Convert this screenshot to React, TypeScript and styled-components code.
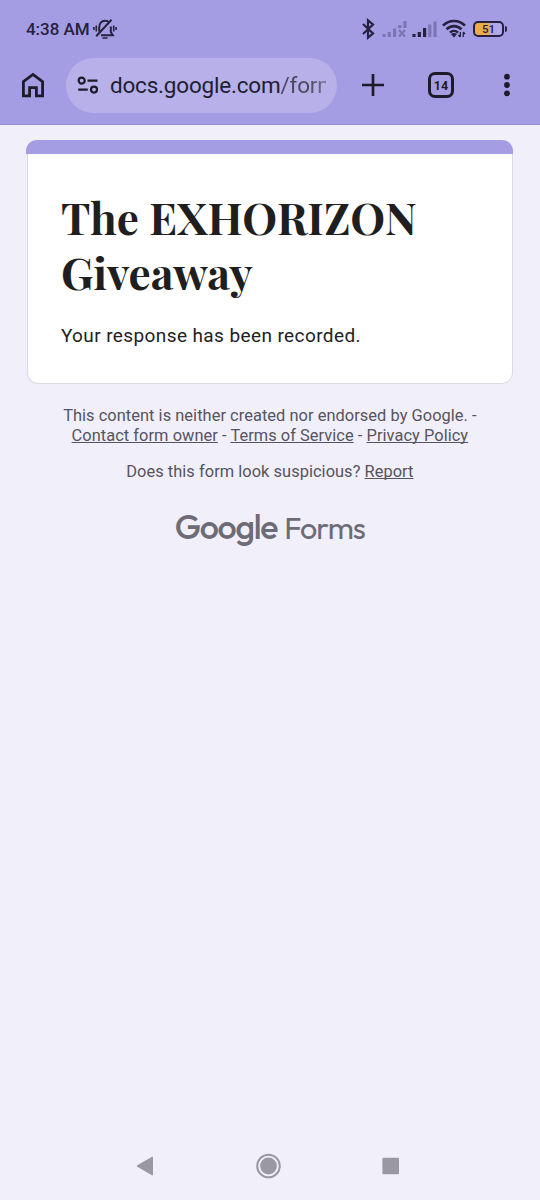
import React from "react";
import styled, { createGlobalStyle } from "styled-components";

const Global = createGlobalStyle`
  * { box-sizing: border-box; }
  body { margin: 0; background: #f1effa; font-family: Roboto, sans-serif; }
  svg { display: block; flex: none; }
`;

const Screen = styled.div`
  width: 540px;
  height: 1200px;
  display: flex;
  flex-direction: column;
  background: #f1effa;
  overflow: hidden;
`;

const Header = styled.header`
  height: 125px;
  background: #a59de3;
  border-bottom: 1px solid #968fc8;
`;

const StatusBar = styled.div`
  height: 57px;
  padding: 0 33px 0 26px;
  display: flex;
  align-items: center;
  color: #25213f;
`;

const Clock = styled.span`
  width: 66.5px;
  padding-top: 1px;
  font-size: 17px;
  line-height: 20px;
  font-weight: 500;
  letter-spacing: -0.05px;
  white-space: nowrap;
`;

const StatusIcons = styled.div`
  margin-left: auto;
  display: flex;
  align-items: center;
`;

const Toolbar = styled.div`
  height: 56px;
  display: flex;
  align-items: center;
  color: #1d1b2a;
`;

const IconButton = styled.button<{ $width: number }>`
  width: ${(p) => p.$width}px;
  height: 56px;
  padding: 0;
  border: 0;
  background: none;
  color: inherit;
  display: flex;
  align-items: center;
  justify-content: center;
`;

const AddressBar = styled.div`
  width: 271px;
  height: 55px;
  padding: 0 11px;
  display: flex;
  align-items: center;
  gap: 11px;
  border-radius: 28px;
  background: #b7b0e9;
`;

const Url = styled.span`
  flex: 1;
  overflow: hidden;
  white-space: nowrap;
  font-size: 22.5px;
  line-height: 30px;
  letter-spacing: -0.2px;
  color: #211e31;
`;

const Path = styled.span`
  background: linear-gradient(90deg, #4a475c 0, #4a475c 28px, #77738f 46px);
  background-clip: text;
  color: transparent;
`;

const TabCount = styled.span`
  width: 26px;
  height: 26px;
  border: 3px solid #1d1b2a;
  border-radius: 7px;
  font: 700 12.5px/21px Roboto, sans-serif;
  text-align: center;
`;

const Main = styled.main`
  flex: 1;
  padding: 14.5px 26.6px 0 26.4px;
`;

const Card = styled.section`
  height: 244.5px;
  border-radius: 11px;
  overflow: hidden;
`;

const Accent = styled.div`
  height: 14px;
  background: #a59de3;
`;

const CardBody = styled.div`
  height: 230.5px;
  margin: 0 0.5px;
  padding: 35.4px 33px 0;
  background: #fff;
  border: 1px solid #dadbe0;
  border-top: 0;
  border-radius: 0 0 11px 11px;
`;

const Title = styled.h1`
  margin: 0;
  font: 700 44px/55px "Playfair Display", "Liberation Serif", serif;
  color: #1f1f1f;
`;

const TitleLine = styled.span`
  display: block;
  white-space: nowrap;
`;

const Message = styled.p`
  margin: 23px 0 0;
  font-size: 19px;
  line-height: 28px;
  letter-spacing: 0.4px;
  color: #202124;
  white-space: nowrap;
`;

const Notice = styled.p<{ $top: number }>`
  margin: ${(p) => p.$top}px 0 0;
  font-size: 16.4px;
  line-height: 20px;
  letter-spacing: 0.05px;
  text-align: center;
  white-space: nowrap;
  color: #56545e;
`;

const Link = styled.a`
  text-decoration: underline;
  text-decoration-skip-ink: none;
  text-underline-offset: 1px;
  text-decoration-thickness: 1px;
`;

const Brand = styled.div`
  margin-top: 24px;
  display: flex;
  justify-content: center;
  align-items: baseline;
  gap: 7px;
  font: 500 34px/42px "Product Sans", "Google Sans", Outfit, Figtree, Poppins, Lato, sans-serif;
  letter-spacing: -1.3px;
  color: #6d6b75;
`;

const Product = styled.span`
  font-weight: 400;
  font-size: 30.5px;
  letter-spacing: -0.9px;
`;

const NavBar = styled.nav`
  height: 68px;
  padding: 6px 89px 0 85px;
  display: flex;
  justify-content: space-between;
`;

const BellOff = () => (
  <svg width="24" height="22" viewBox="0 0 24 22" fill="none" stroke="currentColor" strokeWidth="2">
    <path d="M6.2 13.5V9.5C6.2 5.5 8.5 2.8 12 2.8c1.8 0 3.2.6 4.2 1.7M17.8 8.5v5.5l2 3.2H8M3.2 18.2 18.5 1.8" />
    <path d="M9.5 20h5M3.3 7.5v6M.9 9v3M20.7 7.5v6M23.1 9v3" strokeWidth="1.6" />
  </svg>
);

const Bluetooth = () => (
  <svg width="15" height="22" viewBox="0 0 15 22" fill="none" stroke="currentColor" strokeWidth="2.2">
    <path d="m2 6 10 9.5-5 4.2V2.3l5 4.2L2 16" />
  </svg>
);

const NoSignal = () => (
  <svg width="25" height="18" viewBox="0 0 25 18" stroke="#7c75b4" strokeWidth="3.2">
    <path d="M2 17v-3M7.3 17v-5M12.6 17V8.5M17.8 8V5M23 8V1" />
    <path d="m17 10 6 6.5M23 10l-6 6.5" strokeWidth="2.2" />
  </svg>
);

const Signal = () => (
  <svg width="25" height="18" viewBox="0 0 25 18" stroke="currentColor" strokeWidth="3.2">
    <path d="M2 17v-3M7.3 17v-5M12.6 17V8" />
    <path d="M17.8 17V4.5M23 17V1.5" stroke="#7c75b4" />
  </svg>
);

const Wifi = () => (
  <svg width="24" height="19" viewBox="0 0 24 19" fill="none" stroke="currentColor" strokeWidth="2.6">
    <path d="M1 6.6c6.2-6.2 15.8-6.2 22 0M4.5 10.3c4.3-4.2 10.7-4.2 15 0M8 13.6c2.3-2.2 5.7-2.2 8 0" />
    <path d="m9 15 3 3.5 3-3.5c-1.7-1.5-4.3-1.5-6 0Z" fill="currentColor" stroke="none" />
    <path d="M18.3 13v5M21.3 13v5M16.5 16l1.8 2M23 15l-1.7-2" strokeWidth="1.3" />
  </svg>
);

const BatteryShell = styled.div`
  width: 31px;
  height: 16px;
  border: 2px solid #25213f;
  border-radius: 5px;
  background: linear-gradient(90deg, #b0a8e8 0 1px, #efaa48 1px 14px, #b0a8e8 14px);
  background-clip: padding-box;
  color: #25213f;
  font: 500 11.5px/13px Roboto, sans-serif;
  text-align: center;
`;

const BatteryTip = styled.div`
  width: 2px;
  height: 6px;
  margin-left: 1px;
  border-radius: 0 2px 2px 0;
  background: #25213f;
`;

const Gap = styled.span<{ $size: number }>`
  width: ${(p) => p.$size}px;
`;

export default function App() {
  return (
    <>
      <Global />
      <Screen>
        <Header>
          <StatusBar>
            <Clock>4:38 AM</Clock>
            <BellOff />
            <StatusIcons>
              <Bluetooth />
              <Gap $size={6} />
              <NoSignal />
              <Gap $size={5} />
              <Signal />
              <Gap $size={5} />
              <Wifi />
              <Gap $size={7} />
              <BatteryShell>51</BatteryShell>
              <BatteryTip />
            </StatusIcons>
          </StatusBar>
          <Toolbar>
            <IconButton $width={66} aria-label="Home">
              <svg width="26" height="28" viewBox="0 0 26 28" fill="none" stroke="currentColor" strokeWidth="2.8">
                <path d="M3.4 10.7 13 3.4l9.6 7.3v14.2h-6.2v-8.2H9.6v8.2H3.4Z" />
              </svg>
            </IconButton>
            <AddressBar>
              <svg width="22" height="20" viewBox="0 0 22 20" fill="none" stroke="currentColor" strokeWidth="2.2">
                <circle cx="4.7" cy="5.6" r="3" />
                <circle cx="17" cy="14.6" r="3" />
                <path d="M10.5 5.6h10M1.2 14.6h9.6" />
              </svg>
              <Url>docs.google.com<Path>/forms</Path></Url>
            </AddressBar>
            <IconButton $width={71} aria-label="New tab">
              <svg width="24" height="24" viewBox="0 0 24 24" fill="none" stroke="currentColor" strokeWidth="2.7">
                <path d="M1 12h22M12 1v22" />
              </svg>
            </IconButton>
            <IconButton $width={66} aria-label="Tabs">
              <TabCount>14</TabCount>
            </IconButton>
            <IconButton $width={66} aria-label="Menu">
              <svg width="8" height="24" viewBox="0 0 8 24" fill="currentColor">
                <circle cx="4" cy="3.7" r="2.9" />
                <circle cx="4" cy="12" r="2.9" />
                <circle cx="4" cy="20.3" r="2.9" />
              </svg>
            </IconButton>
          </Toolbar>
        </Header>
        <Main>
          <Card>
            <Accent />
            <CardBody>
              <Title>
                <TitleLine>The EXHORIZON</TitleLine>
                <TitleLine>Giveaway</TitleLine>
              </Title>
              <Message>Your response has been recorded.</Message>
            </CardBody>
          </Card>
          <Notice $top={22.2}>
            This content is neither created nor endorsed by Google. -<br />
            <Link>Contact form owner</Link> - <Link>Terms of Service</Link> - <Link>Privacy Policy</Link>
          </Notice>
          <Notice $top={16}>
            Does this form look suspicious? <Link>Report</Link>
          </Notice>
          <Brand>
            <span>Google</span>
            <Product>Forms</Product>
          </Brand>
        </Main>
        <NavBar>
          <IconButton $width={120} aria-label="Back">
            <svg width="18" height="20" viewBox="0 0 18 20" fill="#9a98a2">
              <path d="M16 .8c.5-.3 1 0 1 .5v17.4c0 .5-.5.8-1 .5L1.3 10.8c-.6-.4-.6-1.2 0-1.6Z" />
            </svg>
          </IconButton>
          <IconButton $width={122} aria-label="Home screen">
            <svg width="26" height="26" viewBox="0 0 26 26" fill="#9a98a2">
              <circle cx="13.5" cy="13" r="11.3" fill="none" stroke="#9a98a2" strokeWidth="2" />
              <circle cx="13.5" cy="13" r="8.4" />
            </svg>
          </IconButton>
          <IconButton $width={120} aria-label="Recent apps">
            <svg width="18" height="18" viewBox="0 0 18 18" fill="#9a98a2">
              <rect x=".4" y=".7" width="16.6" height="16.6" rx="1" />
            </svg>
          </IconButton>
        </NavBar>
      </Screen>
    </>
  );
}
